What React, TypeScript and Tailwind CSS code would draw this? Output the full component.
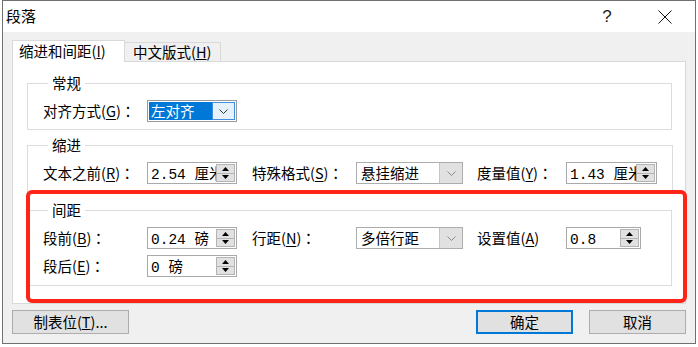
import { FC, ReactNode } from "react";

const font = { fontFamily: '"Noto Sans CJK SC", "Liberation Sans", sans-serif' };
const jp = { fontFamily: '"Noto Sans CJK JP", sans-serif' };

const Chevron: FC<{ color?: string }> = ({ color = "#606060" }) => (
  <svg width="9" height="5" viewBox="0 0 9 5" fill="none">
    <polyline points="0.5,0.5 4.5,4.5 8.5,0.5" stroke={color} strokeWidth="1" />
  </svg>
);

const Arrow: FC<{ up?: boolean }> = ({ up }) => (
  <svg width="7" height="4" viewBox="0 0 7 4">
    <polygon points={up ? "0,4 7,4 3.5,0" : "0,0 7,0 3.5,4"} fill="#000" />
  </svg>
);

// label with underlined mnemonic
const L: FC<{ t: string; k: string; colon?: boolean; className?: string }> = ({ t, k, colon = true, className }) => (
  <div className={"whitespace-nowrap leading-[22px] " + (className ?? "")}>
    {t}(<u className="underline-offset-2">{k}</u>)
    {colon && <span style={jp}>：</span>}
  </div>
);

const Spin: FC<{ value: ReactNode; className: string }> = ({ value, className }) => (
  <div className={"flex h-[22px] border border-[#a9a9a9] bg-white " + className}>
    <div className="flex-1 overflow-hidden whitespace-nowrap pl-[3px] leading-[20px]">{value}</div>
    <div className="flex w-[20px] flex-col py-px pr-px">
      <div className="flex flex-1 items-center justify-center border border-[#b4b4b4] bg-[#e1e1e1]">
        <Arrow up />
      </div>
      <div className="flex flex-1 items-center justify-center border border-t-0 border-[#b4b4b4] bg-[#e1e1e1]">
        <Arrow />
      </div>
    </div>
  </div>
);

const Select: FC<{ value: string }> = ({ value }) => (
  <div className="flex h-[22px] w-[107px] border border-[#adadad] bg-white">
    <div className="flex-1 whitespace-nowrap pl-[4px] leading-[20px]">{value}</div>
    <div className="flex w-[23px] items-center justify-center border-l border-[#c4c4c4] bg-[#e1e1e1]">
      <Chevron color="#8a8a8a" />
    </div>
  </div>
);

const Num: FC<{ n: string; u?: string }> = ({ n, u }) => (
  <>
    <span style={{ fontFamily: '"Liberation Mono", monospace' }}>{n} </span>
    {u}
  </>
);

const Group: FC<{ title: string; className?: string; children: ReactNode }> = ({ title, className, children }) => (
  <fieldset className={"border border-[#dcdcdc] px-[15px] " + (className ?? "")}>
    <legend className="ml-[5px] px-[4px] leading-[20px]">{title}</legend>
    {children}
  </fieldset>
);

export default function App() {
  return (
    <div className="relative h-[347px] w-[698px] bg-white text-[14.5px] text-black" style={font}>
      <div className="ml-[2px] flex h-[344px] w-[694px] flex-col border border-[#707070]">
        {/* title bar */}
        <div className="flex h-[31px] shrink-0 items-center bg-white pl-[3px]">
          <span className="text-[15px]">段落</span>
          <div className="ml-auto flex items-center pr-[15px]">
            <span className="w-[30px] text-center text-[17px] text-[#222]" style={{ fontFamily: '"Liberation Sans", sans-serif' }}>
              ?
            </span>
            <span className="w-[28px]" />
            <span className="flex w-[30px] justify-center">
              <svg width="14" height="14" viewBox="0 0 14 14">
                <path d="M0.5 0.5 L13.5 13.5 M13.5 0.5 L0.5 13.5" stroke="#111" strokeWidth="1" />
              </svg>
            </span>
          </div>
        </div>

        <div className="flex flex-1 flex-col bg-[#f0f0f0] px-[9px] pt-[8px]">
          {/* tabs */}
          <div className="flex items-end">
            <div className="relative z-10 -mb-px h-[22px] w-[113px] border border-b-0 border-[#d9d9d9] bg-white pl-[6px] leading-[20px]">
              缩进和间距(<u>I</u>)
            </div>
            <div className="h-[19px] w-[96px] border border-l-0 border-b-0 border-[#d9d9d9] bg-[#f0f0f0] pl-[8px] leading-[18px]">
              中文版式(<u>H</u>)
            </div>
          </div>

          {/* panel */}
          <div className="h-[243px] border border-[#d9d9d9] bg-white pl-[14px] pr-[13px] pt-[11px]">
            <Group title="常规" className="pb-[7px]">
              <div className="mt-[7px] flex items-center">
                <L t="对齐方式" k="G" className="w-[104px]" />
                <div className="flex h-[22px] w-[90px] border border-[#9a9a9a] bg-white p-px">
                  <div className="flex-1 bg-[#0078d7] pl-[2px] leading-[18px] text-white">左对齐</div>
                  <div className="flex w-[23px] items-center justify-center border border-[#3d8ee0] bg-[#e5f1fb]">
                    <Chevron color="#333" />
                  </div>
                </div>
              </div>
            </Group>

            <Group title="缩进" className="mt-[5px] pb-[8px]">
              <div className="mt-[7px] flex items-center">
                <L t="文本之前" k="R" className="w-[104px]" />
                <Spin value={<Num n="2.54" u="厘米" />} className="w-[90px]" />
                <L t="特殊格式" k="S" className="ml-[15px] w-[104px]" />
                <Select value="悬挂缩进" />
                <L t="度量值" k="Y" className="ml-[14px] w-[89px]" />
                <Spin value={<Num n="1.43" u="厘米" />} className="w-[91px]" />
              </div>
            </Group>

            <Group title="间距" className="mt-[7px] pb-[8px]">
              <div className="mt-[7px] flex items-center">
                <L t="段前" k="B" className="w-[104px]" />
                <Spin value={<Num n="0.24" u="磅" />} className="w-[90px]" />
                <L t="行距" k="N" className="ml-[15px] w-[104px]" />
                <Select value="多倍行距" />
                <L t="设置值" k="A" colon={false} className="ml-[14px] w-[89px]" />
                <Spin value={<Num n="0.8" />} className="w-[75px]" />
              </div>
              <div className="mt-[6px] flex items-center">
                <L t="段后" k="E" className="w-[104px]" />
                <Spin value={<Num n="0" u="磅" />} className="w-[90px]" />
              </div>
            </Group>
          </div>

          {/* buttons */}
          <div className="mt-[6px] flex items-center">
            <button className="h-[24px] w-[117px] border border-[#adadad] bg-[#e1e1e1] leading-[22px]">
              制表位(<u>T</u>)...
            </button>
            <button className="ml-auto h-[24px] w-[97px] border-2 border-[#0078d7] bg-[#e1e1e1] leading-[20px]">
              确定
            </button>
            <button className="ml-[16px] h-[24px] w-[97px] border border-[#adadad] bg-[#e1e1e1] leading-[22px]">
              取消
            </button>
          </div>
        </div>
      </div>

      {/* red annotation */}
      <div className="absolute left-[26px] top-[190px] h-[113px] w-[661px] rounded-[6px] border-4 border-[#ff2418]" />
    </div>
  );
}
